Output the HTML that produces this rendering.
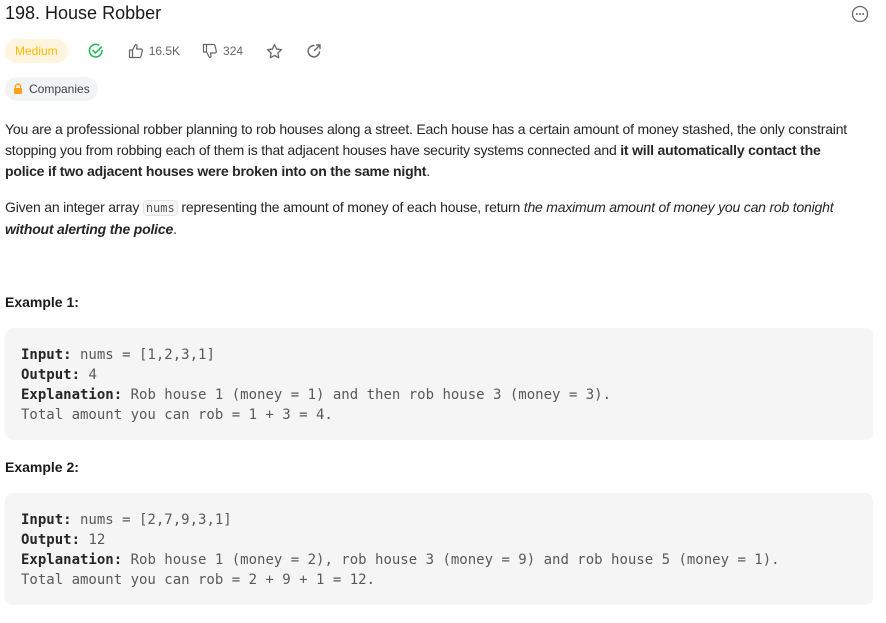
<html><head><style>
body{margin:0;background:#fff;font-family:"Liberation Sans","DejaVu Sans",sans-serif;color:#262626;width:886px;height:623px;overflow:hidden;position:relative}
.t{position:absolute;left:5px;top:3px;font-size:18px;font-weight:500;color:#1a1a1a}
.row{position:absolute;top:39px;left:5px;height:24px;display:flex;align-items:center;font-size:12px;color:#666}
.pill{background:#fff4dd;color:#ffb800;border-radius:12px;padding:0 10px;height:24px;line-height:24px;font-size:12px}
.comp{position:absolute;left:5px;top:77px;background:#f2f3f4;border-radius:12px;height:24px;line-height:24px;padding:0 8px;font-size:12px;color:#444}
.p{position:absolute;left:5px;width:880px;font-size:14px;line-height:21px;color:#262626;letter-spacing:-0.2px;white-space:nowrap}
code{font-family:"DejaVu Sans Mono",monospace;font-size:12px;background:#f5f5f5;border:1px solid #e5e5e5;border-radius:4px;padding:0 2px;color:#555;letter-spacing:0}
.h{position:absolute;left:5px;font-size:14px;font-weight:bold;color:#1a1a1a}
pre{position:absolute;left:5px;width:868px;margin:0;background:#f5f5f5;border-radius:8px;box-sizing:border-box;padding:17px 16px;font-family:"DejaVu Sans Mono",monospace;font-size:14px;line-height:20px;color:#595959}
pre b{color:#262626}
svg{display:block}
</style></head><body>
<div class="t">198. House Robber</div>
<svg style="position:absolute;left:851px;top:5px" width="18" height="18" viewBox="0 0 18 18"><circle cx="9" cy="9" r="7.5" fill="none" stroke="#666" stroke-width="1.3"/><circle cx="5.8" cy="9" r="1" fill="#666"/><circle cx="9" cy="9" r="1" fill="#666"/><circle cx="12.2" cy="9" r="1" fill="#666"/></svg>
<div class="row"><span class="pill">Medium</span>
<svg style="margin-left:20px" width="16" height="16" viewBox="0 0 16 16"><path d="M14 7.5A6.3 6.3 0 1 1 10.5 2" fill="none" stroke="#2cbb5d" stroke-width="1.6" stroke-linecap="round"/><path d="M5 7.5l2.5 2.5 6-6" fill="none" stroke="#2cbb5d" stroke-width="1.6" stroke-linecap="round"/></svg>
<svg style="margin-left:24px" width="16" height="16" viewBox="0 0 16 16"><path d="M1.5 7h3v7.5h-3zM4.5 7l3-5.5c1.2 0 1.8 .8 1.5 2L8.5 6h4.5c.9 0 1.5.8 1.3 1.6l-1.3 5.6c-.2.8-.8 1.3-1.5 1.3H4.5" fill="none" stroke="#666" stroke-width="1.2" stroke-linejoin="round"/></svg><span style="margin-left:5px">16.5K</span>
<svg style="margin-left:22px" width="16" height="16" viewBox="0 0 16 16" transform="scale(1,-1)"><path d="M1.5 7h3v7.5h-3zM4.5 7l3-5.5c1.2 0 1.8 .8 1.5 2L8.5 6h4.5c.9 0 1.5.8 1.3 1.6l-1.3 5.6c-.2.8-.8 1.3-1.5 1.3H4.5" fill="none" stroke="#666" stroke-width="1.2" stroke-linejoin="round"/></svg><span style="margin-left:5px">324</span>
<svg style="margin-left:23px" width="17" height="17" viewBox="0 0 16 16"><path d="M8 1.5l2 4.2 4.5.6-3.3 3.1.8 4.5L8 11.7 4 13.9l.8-4.5L1.5 6.3 6 5.7z" fill="none" stroke="#666" stroke-width="1.2" stroke-linejoin="round"/></svg>
<svg style="margin-left:23px" width="16" height="16" viewBox="0 0 16 16"><path d="M13.5 9A5.7 5.7 0 1 1 8 2.5" fill="none" stroke="#666" stroke-width="1.4" stroke-linecap="round"/><path d="M8.5 7.5L14 2M10.5 2H14v3.5" fill="none" stroke="#666" stroke-width="1.4" stroke-linecap="round"/></svg>
</div>
<div class="comp"><svg style="display:inline-block;vertical-align:-1px;margin-right:6px" width="10" height="11" viewBox="0 0 10 11"><path d="M2.5 5V3.5a2.5 2.5 0 0 1 5 0V5" fill="none" stroke="#ffa116" stroke-width="1.4"/><rect x="1" y="5" width="8" height="6" rx="1" fill="#ffa116"/></svg>Companies</div>
<div class="p" style="top:119px">You are a professional robber planning to rob houses along a street. Each house has a certain amount of money stashed, the only constraint<br>stopping you from robbing each of them is that adjacent houses have security systems connected and <b>it will automatically contact the<br>police if two adjacent houses were broken into on the same night</b>.</div>
<div class="p" style="top:197px">Given an integer array <code>nums</code> representing the amount of money of each house, return <i>the maximum amount of money you can rob tonight<br><b>without alerting the police</b></i>.</div>
<div class="h" style="top:294px">Example 1:</div>
<pre style="top:328px;height:112px"><b>Input:</b> nums = [1,2,3,1]
<b>Output:</b> 4
<b>Explanation:</b> Rob house 1 (money = 1) and then rob house 3 (money = 3).
Total amount you can rob = 1 + 3 = 4.</pre>
<div class="h" style="top:459px">Example 2:</div>
<pre style="top:493px;height:112px"><b>Input:</b> nums = [2,7,9,3,1]
<b>Output:</b> 12
<b>Explanation:</b> Rob house 1 (money = 2), rob house 3 (money = 9) and rob house 5 (money = 1).
Total amount you can rob = 2 + 9 + 1 = 12.</pre>
</body></html>
